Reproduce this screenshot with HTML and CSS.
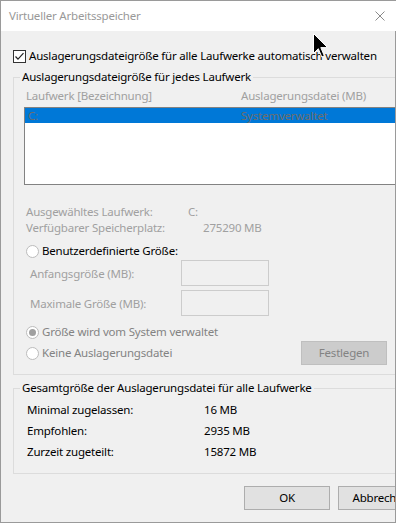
FILE: index.html
```html
<!DOCTYPE html>
<html lang="de">
<head>
  <meta charset="UTF-8">
  <title>Virtueller Arbeitsspeicher</title>
  <link rel="stylesheet" href="styles.css">
</head>
<body>
  <div class="window">
    <div class="titlebar">
      <span class="title">Virtueller Arbeitsspeicher</span>
      <svg class="close" width="10" height="10" viewBox="0 0 10 10">
        <path d="M0.5 0.5 L9.5 9.5 M9.5 0.5 L0.5 9.5" stroke="#8a8a8a" stroke-width="1"/>
      </svg>
    </div>

    <div class="content">
      <label class="check-row">
        <svg class="checkbox" width="13" height="13" viewBox="0 0 13 13">
          <rect x="0.5" y="0.5" width="12" height="12" fill="#fff" stroke="#333"/>
          <polyline points="2.5,6.5 5,9.2 10.5,3.2" fill="none" stroke="#222" stroke-width="1.2"/>
        </svg>
        Auslagerungsdateigröße für alle Laufwerke automatisch verwalten
      </label>

      <fieldset class="group">
        <legend>Auslagerungsdateigröße für jedes Laufwerk</legend>
        <div class="drives-body">
          <div class="list-head">
            <span>Laufwerk [Bezeichnung]</span>
            <span>Auslagerungsdatei (MB)</span>
          </div>
          <div class="listbox">
            <div class="list-row selected">
              <span>C:</span>
              <span>Systemverwaltet</span>
            </div>
          </div>

          <div class="info">
            <div class="info-row"><span class="info-label label-drive">Ausgewähltes Laufwerk:</span><span>C:</span></div>
            <div class="info-row"><span class="info-label label-space">Verfügbarer Speicherplatz:</span><span>275290 MB</span></div>
          </div>

          <div class="radio-row custom">
            <span class="radio"></span>
            <span>Benutzerdefinierte Größe:</span>
          </div>
          <div class="size-row">
            <span class="size-label">Anfangsgröße (MB):</span>
            <span class="size-input"></span>
          </div>
          <div class="size-row second">
            <span class="size-label">Maximale Größe (MB):</span>
            <span class="size-input"></span>
          </div>

          <div class="radio-row system disabled">
            <span class="radio checked"></span>
            <span>Größe wird vom System verwaltet</span>
          </div>
          <div class="action-row">
            <div class="radio-row disabled">
              <span class="radio"></span>
              <span>Keine Auslagerungsdatei</span>
            </div>
            <button class="btn btn-disabled">Festlegen</button>
          </div>
        </div>
      </fieldset>

      <fieldset class="group total">
        <legend>Gesamtgröße der Auslagerungsdatei für alle Laufwerke</legend>
        <div class="total-body">
          <div class="total-row"><span class="total-label">Minimal zugelassen:</span><span>16 MB</span></div>
          <div class="total-row"><span class="total-label">Empfohlen:</span><span>2935 MB</span></div>
          <div class="total-row"><span class="total-label">Zurzeit zugeteilt:</span><span>15872 MB</span></div>
        </div>
      </fieldset>

      <div class="buttons">
        <button class="btn">OK</button>
        <button class="btn">Abbrechen</button>
      </div>
    </div>

    <svg class="cursor" width="16" height="26" viewBox="0 0 16 26">
      <path d="M0.5 0.5 L0.5 20.5 L5.3 15.7 L8.8 24 L11.3 22.8 L7.8 14.6 L14.6 14.6 Z" fill="#000" stroke="#fff" stroke-width="1"/>
    </svg>
  </div>
</body>
</html>
```

FILE: styles.css
```css
body {
  margin: 0;
  font-family: "Noto Sans", "Open Sans", sans-serif;
  font-size: 11.5px;
  letter-spacing: -0.2px;
  color: #000;
  background: #fff;
}
.window {
  position: relative;
  width: 396px;
  height: 523px;
  box-sizing: border-box;
  border-left: 1px solid #9a9a9a;
  border-top: 1px solid #9a9a9a;
  border-bottom: 1px solid #9a9a9a;
  display: flex;
  flex-direction: column;
  overflow: hidden;
}
.titlebar {
  height: 30px;
  flex: 0 0 30px;
  background: #fff;
  display: flex;
  align-items: center;
  justify-content: space-between;
  padding: 0 11px 0 8px;
}
.title {
  color: #999;
  line-height: 16px;
}
.close {
  display: block;
}
.content {
  flex: 1;
  background: #f0f0f0;
  border-right: 1px solid #9a9a9a;
  overflow: hidden;
}
.check-row {
  display: flex;
  align-items: center;
  gap: 3px;
  height: 16px;
  line-height: 16px;
  margin: 17px 0 0 12px;
  white-space: nowrap;
}
.checkbox {
  display: block;
  flex: 0 0 13px;
}
.group {
  margin: 5px 0 0 12px;
  padding: 0;
  width: 420px;
  min-width: 0;
  border: 1px solid #dcdcdc;
}
.group legend {
  margin-left: 6px;
  padding: 0 2px;
  line-height: 16px;
  white-space: nowrap;
}
.drives-body {
  padding: 3px 0 9px 10px;
}
.list-head {
  display: grid;
  grid-template-columns: 215px auto;
  padding-left: 2px;
  line-height: 16px;
  color: #a0a0a0;
  white-space: nowrap;
}
.listbox {
  margin-top: 3px;
  width: 400px;
  height: 78px;
  box-sizing: border-box;
  border: 1px solid #828282;
  background: #fff;
}
.list-row {
  display: grid;
  grid-template-columns: 213px auto;
  height: 15px;
  line-height: 15px;
  padding-left: 3px;
  color: #6d6d6d;
}
.list-row.selected {
  background: #0078d7;
}
.info {
  margin-top: 19px;
  color: #a0a0a0;
}
.info-row {
  display: flex;
  line-height: 16px;
  padding-left: 2px;
  white-space: nowrap;
}
.info-label.label-drive {
  width: 162px;
}
.info-label.label-space {
  width: 177px;
}
.radio-row {
  display: flex;
  align-items: center;
  gap: 3px;
  height: 16px;
  line-height: 16px;
  padding-left: 2px;
  white-space: nowrap;
}
.radio-row.custom {
  margin-top: 7px;
}
.radio-row.system {
  margin-top: 8px;
}
.radio-row.disabled {
  color: #838383;
}
.radio {
  width: 13px;
  height: 13px;
  box-sizing: border-box;
  border: 1px solid #bcbcbc;
  border-radius: 50%;
  background: #fff;
  display: flex;
  align-items: center;
  justify-content: center;
}
.radio.checked::after {
  content: "";
  width: 7px;
  height: 7px;
  border-radius: 50%;
  background: #a0a0a0;
}
.size-row {
  display: flex;
  align-items: center;
  margin-top: 1px;
  padding-left: 6px;
  color: #a0a0a0;
  white-space: nowrap;
}
.size-row.second {
  margin-top: 4px;
}
.size-label {
  width: 151px;
}
.size-input {
  width: 88px;
  height: 26px;
  box-sizing: border-box;
  border: 1px solid #cccccc;
  background: #f0f0f0;
}
.action-row {
  display: flex;
  align-items: center;
  justify-content: space-between;
  width: 363px;
  margin-top: 1px;
}
.btn {
  width: 86px;
  height: 24px;
  box-sizing: border-box;
  border: 1px solid #adadad;
  background: #e1e1e1;
  font: inherit;
  letter-spacing: inherit;
  color: #000;
  padding: 0;
  line-height: 20px;
}
.btn-disabled {
  background: #cccccc;
  border-color: #bfbfbf;
  color: #838383;
}
.total {
  margin-top: 5px;
}
.total-body {
  padding: 6px 0 13px 13px;
  display: flex;
  flex-direction: column;
  gap: 5px;
}
.total-row {
  display: flex;
  line-height: 16px;
  white-space: nowrap;
}
.total-label {
  width: 177px;
}
.buttons {
  display: flex;
  justify-content: flex-end;
  gap: 8px;
  width: 434px;
  box-sizing: border-box;
  padding-right: 11px;
  margin-top: 12px;
}
.cursor {
  position: absolute;
  left: 312px;
  top: 32px;
}
```
